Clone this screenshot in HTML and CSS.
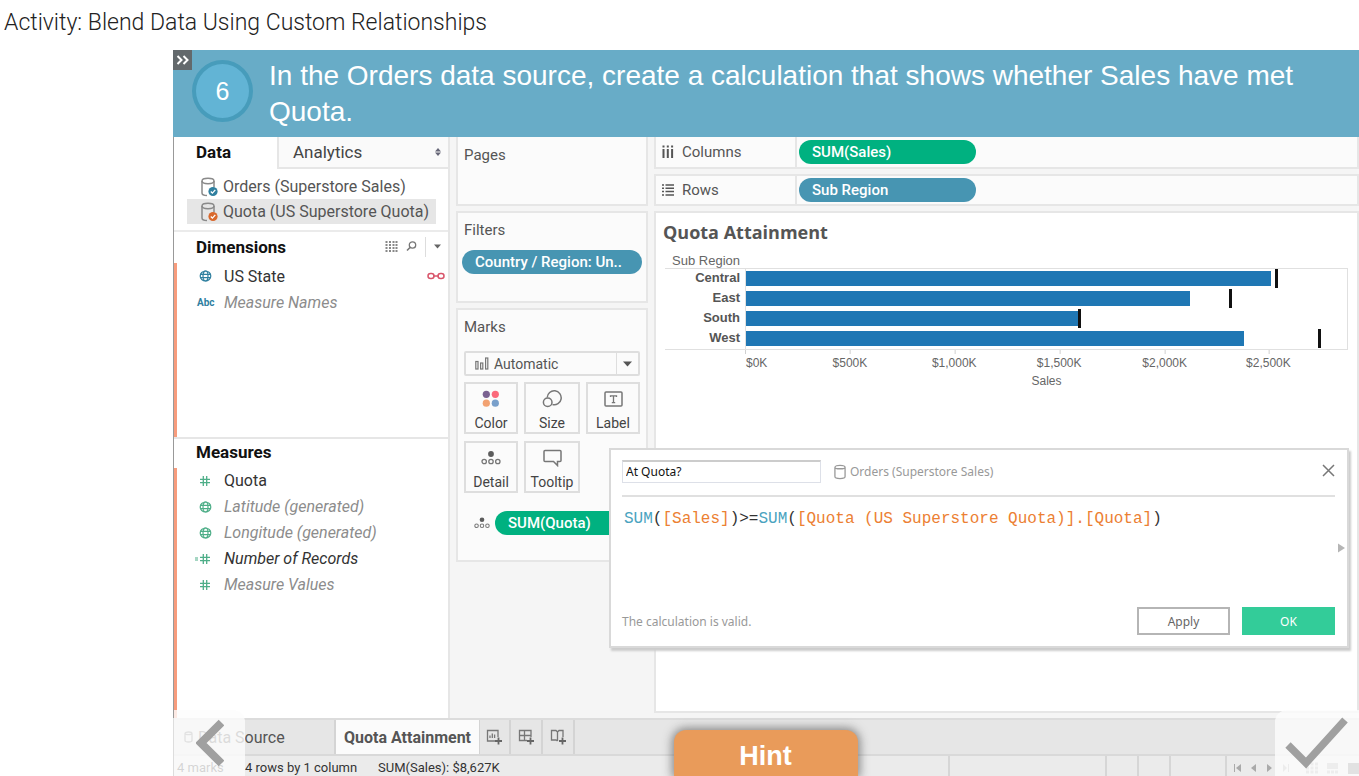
FILE: index.html
```html
<!DOCTYPE html>
<html lang="en">
<head>
<meta charset="utf-8">
<title>Activity: Blend Data Using Custom Relationships</title>
<link rel="stylesheet" href="styles.css">
</head>
<body>
<svg class="defs" aria-hidden="true">
  <symbol id="db" viewBox="0 0 18 20"><g fill="none" stroke="#8a8a8a" stroke-width="1.5"><ellipse cx="8" cy="4" rx="6" ry="2.7"/><path d="M2 4v12c0 1.500 2 2.500 5 2.500M14 4v6"/></g><circle cx="13" cy="14.500" r="4.600" fill="currentColor"/><path d="M10.800 14.500l1.600 1.600 2.900-3.200" fill="none" stroke="#fff" stroke-width="1.300"/></symbol>
  <symbol id="globe" viewBox="0 0 12 12"><g fill="none" stroke="currentColor" stroke-width="1.200"><ellipse cx="6" cy="6" rx="5.300" ry="5"/><ellipse cx="6" cy="6" rx="2.500" ry="5"/><path d="M1 4.300h10M1 7.700h10"/></g></symbol>
  <symbol id="hash" viewBox="0 0 12 12"><path d="M4.300 1v10M7.700 1v10M1 4.300h10M1 7.700h10" fill="none" stroke="currentColor" stroke-width="1.300"/></symbol>
  <symbol id="detail" viewBox="0 0 20 16"><circle cx="10" cy="4" r="2.900" fill="#5c5c5c"/><g fill="none" stroke="#777" stroke-width="1.300"><circle cx="3.200" cy="11.500" r="2.200"/><circle cx="10" cy="11.500" r="2.200"/><circle cx="16.800" cy="11.500" r="2.200"/></g></symbol>
</svg>

<h1 class="title">Activity: Blend Data Using Custom Relationships</h1>

<main class="player">
  <header class="banner">
    <button class="expand" aria-label="Expand"><svg width="13" height="10" viewBox="0 0 13 10"><path d="M1.500 1l4 4-4 4M7.500 1l4 4-4 4" fill="none" stroke="#fff" stroke-width="2"/></svg></button>
    <span class="step">6</span>
    <p class="instruction">In the Orders data source, create a calculation that shows whether Sales have met Quota.</p>
  </header>

  <div class="workspace">
    <aside class="data-pane">
      <div class="pane-tabs">
        <button class="pane-tab active">Data</button>
        <button class="pane-tab">Analytics<svg width="6" height="8" viewBox="0 0 6 8"><path d="M0 3.500L3 0 6 3.500zM0 4.500L3 8 6 4.500z" fill="#667" /></svg></button>
      </div>
      <ul class="sources">
        <li><svg class="blue" width="18" height="20"><use href="#db"/></svg>Orders (Superstore Sales)</li>
        <li class="selected"><svg class="orange" width="18" height="20"><use href="#db"/></svg>Quota (US Superstore Quota)</li>
      </ul>
      <section class="fields dimensions">
        <div class="fields-head"><h2>Dimensions</h2>
          <span class="tools">
            <svg width="13" height="11" viewBox="0 0 13 11"><path d="M1.500 0v11M5 0v11M8.500 0v11M11.500 0v11" stroke="#888" stroke-width="2" stroke-dasharray="2 1"/></svg>
            <svg width="11" height="11" viewBox="0 0 11 11"><circle cx="6.500" cy="4" r="3.200" fill="none" stroke="#777" stroke-width="1.300"/><path d="M4 6.500L1 9.500" stroke="#777" stroke-width="1.600"/></svg>
            <i class="bar"></i>
            <svg width="7" height="5" viewBox="0 0 7 5"><path d="M0 0.500h7L3.500 4.500z" fill="#666"/></svg>
          </span>
        </div>
        <ul class="accent">
          <li><span class="type blue"><svg width="13" height="12"><use href="#globe"/></svg></span>US State
            <svg class="link" width="18" height="8" viewBox="0 0 18 8"><g fill="none" stroke="#d9566b" stroke-width="1.500"><rect x="1" y="1.500" width="6" height="5" rx="2.500"/><rect x="11" y="1.500" width="6" height="5" rx="2.500"/><path d="M6 4h6"/></g></svg></li>
          <li class="generated"><span class="type blue abc">Abc</span>Measure Names</li>
        </ul>
      </section>
      <section class="fields measures">
        <div class="fields-head"><h2>Measures</h2></div>
        <ul class="accent">
          <li><span class="type green"><svg width="12" height="12"><use href="#hash"/></svg></span>Quota</li>
          <li class="generated"><span class="type green"><svg width="13" height="12"><use href="#globe"/></svg></span>Latitude (generated)</li>
          <li class="generated"><span class="type green"><svg width="13" height="12"><use href="#globe"/></svg></span>Longitude (generated)</li>
          <li class="records"><span class="type green"><svg width="16" height="12" viewBox="0 0 16 12"><path d="M0 5h3M0 7h3" stroke="currentColor"/><use href="#hash" x="4" width="12" height="12"/></svg></span>Number of Records</li>
          <li class="generated"><span class="type green"><svg width="12" height="12"><use href="#hash"/></svg></span>Measure Values</li>
        </ul>
      </section>
    </aside>

    <div class="cards">
      <section class="card pages"><h3>Pages</h3></section>
      <section class="card filters"><h3>Filters</h3><span class="pill pill-blue">Country / Region: Un..</span></section>
      <section class="card marks"><h3>Marks</h3>
        <button class="mark-type"><svg width="14" height="13" viewBox="0 0 14 13"><g fill="none" stroke="#777" stroke-width="1.200"><rect x="0.800" y="4.500" width="2.200" height="7.500"/><rect x="5.600" y="6" width="2.200" height="6"/><rect x="10.600" y="1" width="2.200" height="11"/></g></svg>Automatic<span class="drop"><svg width="9" height="6" viewBox="0 0 9 6"><path d="M0 0.500h9L4.500 5.500z" fill="#555"/></svg></span></button>
        <div class="mark-grid">
          <button><svg width="18" height="18" viewBox="0 0 18 18"><circle cx="4.300" cy="4.300" r="3.600" fill="#7b6291"/><circle cx="13.300" cy="4.300" r="3.600" fill="#fb6a7b"/><circle cx="4.300" cy="13.200" r="3.600" fill="#f2a272"/><circle cx="13.300" cy="13.200" r="3.600" fill="#79a0cb"/></svg>Color</button>
          <button><svg width="20" height="18" viewBox="0 0 20 18"><g fill="none" stroke="#777" stroke-width="1.500"><path d="M5.200 7.500A7 7 0 1 1 10.500 14.600"/><circle cx="5.700" cy="12.300" r="4.300"/></g></svg>Size</button>
          <button><svg width="19" height="18" viewBox="0 0 19 18"><rect x="1" y="2" width="17" height="14" rx="1" fill="none" stroke="#777" stroke-width="1.500"/><path d="M6.500 7V5.800h6V7M9.500 5.800v6.900M7.800 12.700h3.400" fill="none" stroke="#777" stroke-width="1.300"/></svg>Label</button>
          <button><svg width="20" height="18"><use href="#detail" y="1" width="20" height="16"/></svg>Detail</button>
          <button><svg width="19" height="18" viewBox="0 0 19 18"><path d="M2 1.500h15q1 0 1 1v9q0 1-1 1h-2.500v4l-4-4H2q-1 0-1-1v-9q0-1 1-1z" fill="none" stroke="#777" stroke-width="1.500"/></svg>Tooltip</button>
        </div>
        <div class="mark-pill"><svg width="16" height="14"><use href="#detail" width="16" height="14"/></svg><span class="pill pill-green">SUM(Quota)</span></div>
      </section>
    </div>

    <div class="sheet">
      <div class="shelf"><span class="shelf-name"><svg width="12" height="14" viewBox="0 0 12 14"><path d="M1.500 0.500v2M5.800 0.500v2M10.100 0.500v2M1.500 4v9M5.800 4v9M10.100 4v9" stroke="#555" stroke-width="2"/></svg>Columns</span><span class="pill pill-green">SUM(Sales)</span></div>
      <div class="shelf"><span class="shelf-name"><svg width="12" height="14" viewBox="0 0 12 14"><path d="M0 2h2M0 5.300h2M0 8.600h2M0 11.900h2M3.500 2H12M3.500 5.300H12M3.500 8.600H12M3.500 11.900H12" stroke="#555" stroke-width="1.500"/></svg>Rows</span><span class="pill pill-blue">Sub Region</span></div>
      <section class="viz">
        <h2>Quota Attainment</h2>
        <div class="chart">
          <span class="row-title">Sub Region</span>
          <div class="row-labels"><span>Central</span><span>East</span><span>South</span><span>West</span></div>
          <div class="plot">
            <div class="track"><b style="width:87.4%"></b><i style="left:88.2%"></i></div>
            <div class="track"><b style="width:73.8%"></b><i style="left:80.6%"></i></div>
            <div class="track"><b style="width:55.4%"></b><i style="left:55.4%"></i></div>
            <div class="track"><b style="width:82.9%"></b><i style="left:95.3%"></i></div>
          </div>
          <div class="axis">
            <span class="first" style="left:0%">$0K</span><span style="left:17.4%">$500K</span><span style="left:34.7%">$1,000K</span><span style="left:52.1%">$1,500K</span><span style="left:69.6%">$2,000K</span><span style="left:86.8%">$2,500K</span>
          </div>
          <span class="axis-title">Sales</span>
        </div>
      </section>
    </div>

    <section class="dialog" role="dialog" aria-label="Calculation editor">
      <div class="dialog-head">
        <input type="text" value="At Quota?" aria-label="Calculation name">
        <svg width="12" height="16" viewBox="0 0 13 17"><path d="M1 3.500v10c0 3 11 3 11 0v-10M1 3.500c0-3 11-3 11 0M1 3.500c0 2 11 2 11 0" fill="none" stroke="#999" stroke-width="1.400"/></svg>
        <span>Orders (Superstore Sales)</span>
        <button class="close" aria-label="Close"><svg width="13" height="13" viewBox="0 0 13 13"><path d="M1 1l11 11M12 1L1 12" stroke="#777" stroke-width="1.500"/></svg></button>
      </div>
      <div class="formula"><code><span class="fn">SUM</span>(<span class="fld">[Sales]</span>)&gt;=<span class="fn">SUM</span>(<span class="fld">[Quota (US Superstore Quota)].[Quota]</span>)</code>
        <svg class="more" width="7" height="10" viewBox="0 0 7 10"><path d="M0 0.500l7 4.500-7 4.500z" fill="#b5b5b5"/></svg></div>
      <div class="dialog-foot"><span>The calculation is valid.</span><button>Apply</button><button class="ok">OK</button></div>
    </section>
  </div>

  <footer class="bottom">
    <div class="sheet-tabs">
      <button class="source-tab"><svg width="9" height="12" viewBox="0 0 9 12"><path d="M1 2.500v7c0 2 7 2 7 0v-7M1 2.500c0-2 7-2 7 0M1 2.500c0 1.500 7 1.500 7 0" fill="none" stroke="#777" stroke-width="1.300"/></svg>Data Source</button>
      <button class="sheet-tab">Quota Attainment</button>
      <button class="new" aria-label="New worksheet"><svg width="17" height="16" viewBox="0 0 17 16"><path d="M9 12H1.500V1.500H12V8M4 9V6.500M6.300 9V4.500M8.600 9V5.500" fill="none" stroke="#777" stroke-width="1.300"/><path d="M12.500 8.500v7M9 12h7" stroke="#666" stroke-width="1.800"/></svg></button>
      <button class="new" aria-label="New dashboard"><svg width="17" height="16" viewBox="0 0 17 16"><path d="M9 11.500H1.500v-10H13V8M1.500 6.500H13M6.500 1.500v10" fill="none" stroke="#777" stroke-width="1.300"/><path d="M12.500 8.500v7M9 12h7" stroke="#666" stroke-width="1.800"/></svg></button>
      <button class="new" aria-label="New story"><svg width="17" height="16" viewBox="0 0 17 16"><path d="M7.500 12L6 11H1.500V1.500H6L7.500 3 9 1.500h4V8M7.500 3v9" fill="none" stroke="#777" stroke-width="1.300"/><path d="M12.500 8.500v7M9 12h7" stroke="#666" stroke-width="1.800"/></svg></button>
    </div>
    <div class="status">
      <span class="count">4 marks</span><span class="size">4 rows by 1 column</span><span class="sum">SUM(Sales): $8,627K</span>
      <span class="cells"><i class="short"></i><i class="short"></i><i class="long"></i></span>
      <span class="pager"><svg width="130" height="12" viewBox="0 0 130 12"><g fill="#aaa"><path d="M4 2h1v8H4zM11 2v8L6 6zM26 2v8L21 6zM37 2v8l5-4z"/><path d="M53 2v8l4-4zM58 2h1v8h-1z"/></g><path d="M76 2h12M76 6h12M76 10h12" stroke="#b0b0b0" stroke-width="3" stroke-dasharray="3 1.500"/><path d="M97 1h11v6H97zM97 8.500h3v3h-3zM101 8.500h3v3h-3zM105 8.500h3v3h-3z" fill="#b0b0b0"/><path d="M118 1h12v11h-12z" fill="#777"/></svg></span>
    </div>
    <button class="prev" aria-label="Previous"><svg width="28" height="48" viewBox="0 0 28 48"><path d="M25.500 3.500L5 24l20.500 20.500" fill="none" stroke="#a0a0a0" stroke-width="8"/></svg></button>
    <button class="hint">Hint</button>
    <button class="done" aria-label="Done"><svg width="64" height="52" viewBox="0 0 64 52"><path d="M3 28l18 18L60 3" fill="none" stroke="#a0a0a0" stroke-width="7.500"/></svg></button>
  </footer>
</main>
</body>
</html>
```
FILE: styles.css
```css
* { box-sizing: border-box; }
body {
  margin: 0;
  height: 100vh;
  display: flex;
  flex-direction: column;
  overflow: hidden;
  background: #fff;
  color: #555;
  font-family: Roboto, "Liberation Sans", sans-serif;
  font-size: 15px;
}
button { font: inherit; color: inherit; border: 0; padding: 0; background: none; }
h1, h2, h3, p, ul { margin: 0; padding: 0; }
ul { list-style: none; }
svg { flex: none; display: block; }
.defs { position: absolute; width: 0; height: 0; }

.title {
  flex: none;
  height: 50px;
  padding-left: 4px;
  font-size: 23px;
  line-height: 46px;
  font-weight: 300;
  color: #222;
}
.player { flex: 1; min-height: 0; margin-left: 173px; display: flex; flex-direction: column; }

.banner {
  flex: none;
  position: relative;
  min-height: 87px;
  display: flex;
  gap: 16px;
  padding: 8px 60px 6px 19px;
  background: #68acc7;
  color: #fff;
  font-family: "Liberation Sans", Arial, sans-serif;
}
.expand {
  position: absolute;
  left: 0;
  top: 0;
  width: 19px;
  height: 20px;
  display: grid;
  place-items: center;
  background: #63696c;
}
.step {
  flex: none;
  width: 61px;
  height: 62px;
  margin-top: 2px;
  border: 4px solid #479cbb;
  border-radius: 50%;
  background: #62b4d5;
  display: grid;
  place-items: center;
  font-size: 25px;
}
.instruction { font-size: 28px; line-height: 36px; }

.workspace { flex: 1; min-height: 0; position: relative; display: flex; background: #f5f5f5; border-left: 1px solid #999; }
.data-pane { flex: none; width: 276px; display: flex; flex-direction: column; background: #fff; border-right: 2px solid #e6e6e6; color: #555; font-size: 16px; }
.pane-tabs { display: flex; height: 32px; font-size: 17px; }
.pane-tab { display: flex; align-items: center; justify-content: space-between; }
.pane-tab.active { width: 103px; padding: 0 0 2px 22px; font-weight: 700; color: #111; }
.pane-tab:not(.active) { flex: 1; padding: 0 7px 0 14px; background: #fafafa; border-left: 2px solid #e6e6e6; border-bottom: 2px solid #e6e6e6; color: #444; }
.sources { padding: 5px 12px 6px 13px; border-bottom: 2px solid #ebebeb; }
.sources li { height: 25px; display: flex; align-items: center; gap: 5px; padding-left: 13px; white-space: nowrap; }
.sources .selected { background: #e6e6e6; }
.blue { color: #2f7f9f; }
.orange { color: #d9682c; }
.green { color: #4eae88; }
.fields { display: flex; flex-direction: column; color: #333; }
.dimensions { flex: 206; }
.measures { flex: 281; border-top: 2px solid #e6e6e6; }
.fields-head { height: 31px; flex: none; display: flex; align-items: center; justify-content: space-between; padding: 0 7px 2px 22px; }
.measures .fields-head { height: 29px; }
.fields-head h2 { font-size: 17px; font-weight: 700; color: #111; }
.tools { display: flex; align-items: center; gap: 8px; }
.bar { width: 1px; height: 20px; background: #ddd; }
.accent { flex: 1; border-left: 3px solid #f79c7d; }
.accent li { height: 26px; display: flex; align-items: center; padding: 0 3px 0 16px; }
.type { width: 31px; flex: none; display: flex; padding-left: 6px; }
.abc { padding-left: 4px; font-size: 10px; font-weight: 700; font-style: normal; }
.records .type { padding-left: 2px; }
.link { margin-left: auto; }
.generated { font-style: italic; color: #8c8c8c; }
.records { font-style: italic; }

.cards { flex: none; width: 192px; margin-left: 6px; display: flex; flex-direction: column; gap: 5px; }
.card { background: #fbfbfb; border: 2px solid #e6e6e6; padding: 7px 6px 0; }
.card h3 { font-size: 15px; line-height: 20px; font-weight: 400; }
.pages { height: 69px; border-top: 0; padding-top: 8px; }
.filters { height: 92px; padding-left: 4px; padding-right: 4px; }
.filters h3 { padding-left: 2px; }
.marks { min-height: 254px; }
.pill { display: block; height: 24px; line-height: 24px; border-radius: 12px; padding: 0 13px; color: #fff; white-space: nowrap; font-weight: 500; }
.pill-blue { background: #4795b2; }
.pill-green { background: #00b180; }
.filters .pill { margin-top: 10px; }
.mark-type { width: 100%; height: 25px; margin-top: 14px; display: flex; align-items: center; gap: 5px; padding-left: 9px; border: 2px solid #dedede; font-size: 14px; border-radius: 2px; }
.drop { margin-left: auto; width: 22px; height: 100%; display: grid; place-items: center; border-left: 1px solid #dedede; }
.mark-grid { display: grid; grid-template-columns: 54px 56px 54px; justify-content: space-between; gap: 7px 6px; margin-top: 6px; }
.mark-grid button { height: 52px; display: flex; flex-direction: column; align-items: center; justify-content: space-between; padding: 6px 0 1px; border: 2px solid #dedede; font-size: 14px; color: #444; }
.mark-pill { display: flex; align-items: center; gap: 5px; padding-left: 10px; margin-top: 18px; }
.mark-pill .pill { flex: 1; }

.sheet { flex: 1; min-width: 0; margin-left: 6px; display: flex; flex-direction: column; gap: 5px; padding-bottom: 5px; }
.shelf { flex: none; height: 32px; display: flex; align-items: center; background: #fbfbfb; border: 2px solid #e6e6e6; }
.shelf:first-child { border-top: 0; }
.shelf-name { width: 141px; height: 100%; display: flex; align-items: center; gap: 8px; padding-left: 6px; border-right: 2px solid #e6e6e6; }
.shelf .pill { width: 177px; margin-left: 2px; }
.viz { flex: 1; min-height: 0; background: #fff; border: 2px solid #e6e6e6; padding: 5px 9px 0 7px; font-family: "Liberation Sans", Arial, sans-serif; }
.viz h2 { font: 700 18px/28px "Open Sans", "Noto Sans", sans-serif; color: #555; }
.chart { display: grid; grid-template-columns: 80px 1fr; margin: 8px 0 0 2px; font-size: 13px; color: #666; }
.row-title { line-height: 14px; text-align: right; padding-right: 5px; height: 14px; }
.row-labels { grid-row: 2; border-top: 1px solid #e0e0e0; border-bottom: 1px solid #e0e0e0; padding-right: 5px; text-align: right; font-weight: 700; color: #555; display: grid; grid-auto-rows: 20px; line-height: 18px; }
.plot { grid-row: 2; grid-column: 2; border: 1px solid #e0e0e0; display: grid; grid-auto-rows: 20px; }
.track { position: relative; padding-top: 2px; }
.track b { display: block; height: 15px; background: #1f77b4; }
.track i { position: absolute; top: 0; width: 3px; height: 19px; margin-left: -1px; background: #111; }
.axis { grid-row: 3; grid-column: 2; position: relative; height: 22px; }
.axis span { position: absolute; top: 4px; line-height: 18px; transform: translateX(-50%); font-size: 12px; }
.axis span::before { content: ""; position: absolute; left: 50%; top: -4px; height: 4px; border-left: 1px solid #d0d0d0; }
.axis .first { transform: none; padding-left: 1px; }
.axis .first::before { left: 0; }
.axis-title { grid-row: 4; grid-column: 2; text-align: center; font-size: 12px; line-height: 18px; }

.dialog {
  position: absolute;
  left: 435px;
  right: 10px;
  top: 311px;
  height: 200px;
  display: flex;
  flex-direction: column;
  padding: 10px 12px 11px 11px;
  background: #fff;
  border: 2px solid #d9d9d9;
  box-shadow: 2px 3px 2px #ccc;
  font: 12px "Noto Sans", "Open Sans", sans-serif;
  color: #999;
}
.dialog-head { height: 37px; flex: none; display: flex; align-items: flex-start; gap: 4px; line-height: 24px; border-bottom: 2px solid #e0e0e0; }
.dialog-head input { width: 199px; height: 23px; margin-right: 9px; padding: 0 3px; border: 1px solid #dde0e8; border-top: 2px solid #ccc; font: inherit; color: #111; }
.dialog-head svg { margin-top: 4px; }
.close { margin-left: auto; }
.formula { flex: 1; position: relative; padding: 12px 2px; }
.formula code { font: 16px/20px "Liberation Mono", "Courier New", monospace; color: #333; white-space: pre; }
.fn { color: #4aa3c0; }
.fld { color: #ec8033; }
.more { position: absolute; right: -10px; top: 46px; }
.dialog-foot { height: 28px; display: flex; align-items: center; gap: 12px; }
.dialog-foot span { flex: 1; }
.dialog-foot button { width: 93px; height: 28px; border: 2px solid #b5b5b5; color: #666; }
.dialog-foot .ok { border-color: #33cc99; background: #33cc99; color: #fff; }

.bottom { flex: none; height: 58px; position: relative; background: #e6e6e6; border-left: 1px solid #ddd; border-top: 2px solid #dcdcdc; }
.sheet-tabs { height: 36px; display: flex; font-size: 16px; border-bottom: 2px solid #d9d9d9; }
.source-tab { width: 162px; display: flex; align-items: center; gap: 5px; padding-left: 10px; border-right: 2px solid #d4d4d4; }
.sheet-tab { width: 143px; background: #fbfbfb; font-weight: 700; }
.new { width: 32px; display: grid; place-items: center; border-right: 2px solid #d4d4d4; }
.new:nth-child(3) { border-left: 1px solid #d4d4d4; }
.status { display: flex; height: 20px; background: #ebebeb; font-size: 13px; line-height: 24px; color: #333; padding-left: 3px; }
.count { width: 68px; }
.size { width: 133px; }
.sum { flex: 1; white-space: nowrap; }
.cells { display: flex; border-left: 2px solid #d6d6d6; padding-left: 155px; }
.cells i { border-left: 2px solid #d6d6d6; }
.short { width: 32px; }
.long { width: 56px; }
.pager { width: 134px; border-left: 2px solid #d6d6d6; padding: 6px 0 0 3px; overflow: hidden; }
.prev, .done { position: absolute; bottom: 0; height: 66px; display: grid; place-items: center; background: rgba(252, 252, 252, 0.8); }
.prev { left: 0; width: 71px; border-radius: 0 12px 0 0; }
.done { right: 0; width: 84px; border-radius: 12px 0 0 0; }
.hint {
  position: absolute;
  left: calc(50% - 93px);
  bottom: 0;
  width: 184px;
  height: 46px;
  padding-top: 6px;
  border-radius: 12px 12px 0 0;
  background: #e99b5a;
  box-shadow: 0 0 10px 2px rgba(70, 70, 70, 0.6);
  color: #fff;
  font: 700 27px "Liberation Sans", Arial, sans-serif;
}
```
